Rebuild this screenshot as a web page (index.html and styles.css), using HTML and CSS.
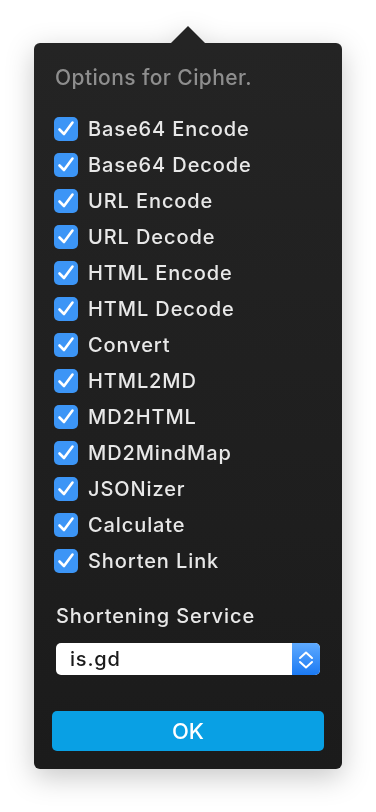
FILE: index.html
```html
<!DOCTYPE html>
<html>
<head>
<meta charset="utf-8">
<link rel="stylesheet" href="styles.css">
</head>
<body>
<div class="popover">
  <svg class="arrow" width="36" height="18" viewBox="0 0 36 18"><path d="M0 18 L18 0 L36 18 Z" fill="#242424"/></svg>
  <div class="panel">
    <div class="title">Options for Cipher.</div>
    <ul class="options">
      <li class="row"><span class="cb"><svg viewBox="0 0 24 24" width="24" height="24"><path d="M5.5 12.5 L10 17 L18.5 5.5" /></svg></span><span class="label">Base64 Encode</span></li>
      <li class="row"><span class="cb"><svg viewBox="0 0 24 24" width="24" height="24"><path d="M5.5 12.5 L10 17 L18.5 5.5" /></svg></span><span class="label">Base64 Decode</span></li>
      <li class="row"><span class="cb"><svg viewBox="0 0 24 24" width="24" height="24"><path d="M5.5 12.5 L10 17 L18.5 5.5" /></svg></span><span class="label">URL Encode</span></li>
      <li class="row"><span class="cb"><svg viewBox="0 0 24 24" width="24" height="24"><path d="M5.5 12.5 L10 17 L18.5 5.5" /></svg></span><span class="label">URL Decode</span></li>
      <li class="row"><span class="cb"><svg viewBox="0 0 24 24" width="24" height="24"><path d="M5.5 12.5 L10 17 L18.5 5.5" /></svg></span><span class="label">HTML Encode</span></li>
      <li class="row"><span class="cb"><svg viewBox="0 0 24 24" width="24" height="24"><path d="M5.5 12.5 L10 17 L18.5 5.5" /></svg></span><span class="label">HTML Decode</span></li>
      <li class="row"><span class="cb"><svg viewBox="0 0 24 24" width="24" height="24"><path d="M5.5 12.5 L10 17 L18.5 5.5" /></svg></span><span class="label">Convert</span></li>
      <li class="row"><span class="cb"><svg viewBox="0 0 24 24" width="24" height="24"><path d="M5.5 12.5 L10 17 L18.5 5.5" /></svg></span><span class="label">HTML2MD</span></li>
      <li class="row"><span class="cb"><svg viewBox="0 0 24 24" width="24" height="24"><path d="M5.5 12.5 L10 17 L18.5 5.5" /></svg></span><span class="label">MD2HTML</span></li>
      <li class="row"><span class="cb"><svg viewBox="0 0 24 24" width="24" height="24"><path d="M5.5 12.5 L10 17 L18.5 5.5" /></svg></span><span class="label">MD2MindMap</span></li>
      <li class="row"><span class="cb"><svg viewBox="0 0 24 24" width="24" height="24"><path d="M5.5 12.5 L10 17 L18.5 5.5" /></svg></span><span class="label">JSONizer</span></li>
      <li class="row"><span class="cb"><svg viewBox="0 0 24 24" width="24" height="24"><path d="M5.5 12.5 L10 17 L18.5 5.5" /></svg></span><span class="label">Calculate</span></li>
      <li class="row"><span class="cb"><svg viewBox="0 0 24 24" width="24" height="24"><path d="M5.5 12.5 L10 17 L18.5 5.5" /></svg></span><span class="label">Shorten Link</span></li>
    </ul>
    <div class="section">Shortening Service</div>
    <div class="select">
      <span class="value">is.gd</span>
      <span class="stepper"><svg width="28" height="32" viewBox="0 0 28 32"><path d="M8 15 L14 9.5 L20 15 M8 19 L14 24.5 L20 19" /></svg></span>
    </div>
    <button class="ok">OK</button>
  </div>
</div>
</body>
</html>
```

FILE: styles.css
```css
html, body {
  margin: 0;
  padding: 0;
  background: #ffffff;
}
body {
  font-family: Inter, "Noto Sans", sans-serif;
  width: 376px;
  height: 812px;
  overflow: hidden;
}
.popover {
  padding-top: 26px;
  margin-left: 34px;
  width: 308px;
  display: flex;
  flex-direction: column;
  filter: drop-shadow(0 8px 14px rgba(0,0,0,0.22));
}
.arrow {
  display: block;
  margin-left: 136px;
  margin-bottom: -1px;
}
.panel {
  background: linear-gradient(#242424, #1b1b1b);
  border-radius: 6px;
  height: 726px;
  box-sizing: border-box;
  padding: 23px 18px 0 18px;
  display: flex;
  flex-direction: column;
}
.title {
  color: #8e8e8e;
  font-size: 21px;
  line-height: 24px;
  padding-left: 3px;
  font-weight: 500;
  letter-spacing: 0.4px;
}
.options {
  list-style: none;
  margin: 21px 0 0 0;
  padding: 0 0 0 2px;
}
.row {
  display: flex;
  align-items: center;
  height: 36px;
}
.cb {
  width: 24px;
  height: 24px;
  border-radius: 5px;
  background: #3c95f6;
  display: flex;
  flex: none;
}
.cb svg path {
  fill: none;
  stroke: #ffffff;
  stroke-width: 2.6;
  stroke-linecap: round;
  stroke-linejoin: round;
}
.label {
  color: #e8e8e8;
  font-size: 20px;
  margin-left: 10px;
  font-weight: 500;
  letter-spacing: 0.9px;
}
.section {
  color: #e8e8e8;
  font-size: 20px;
  line-height: 24px;
  margin-top: 25px;
  padding-left: 4px;
  font-weight: 500;
  letter-spacing: 0.9px;
}
.select {
  margin: 15px 4px 0 4px;
  height: 32px;
  background: #ffffff;
  border-radius: 5px;
  display: flex;
  align-items: center;
  overflow: hidden;
}
.value {
  flex: 1;
  color: #1a1a1a;
  font-size: 20px;
  padding-left: 14px;
  font-weight: 500;
  letter-spacing: 0.8px;
}
.stepper {
  width: 28px;
  height: 32px;
  background: linear-gradient(#5eaaff, #1b7af3);
  display: block;
}
.stepper svg {
  display: block;
}
.stepper path {
  fill: none;
  stroke: #ffffff;
  stroke-width: 2;
  stroke-linecap: round;
  stroke-linejoin: round;
}
.ok {
  margin-top: 36px;
  height: 40px;
  border: none;
  border-radius: 5px;
  background: #09a0e4;
  color: #ffffff;
  font-family: Inter, "Noto Sans", sans-serif;
  font-size: 22px;
  font-weight: 500;
  padding: 0;
}
```
